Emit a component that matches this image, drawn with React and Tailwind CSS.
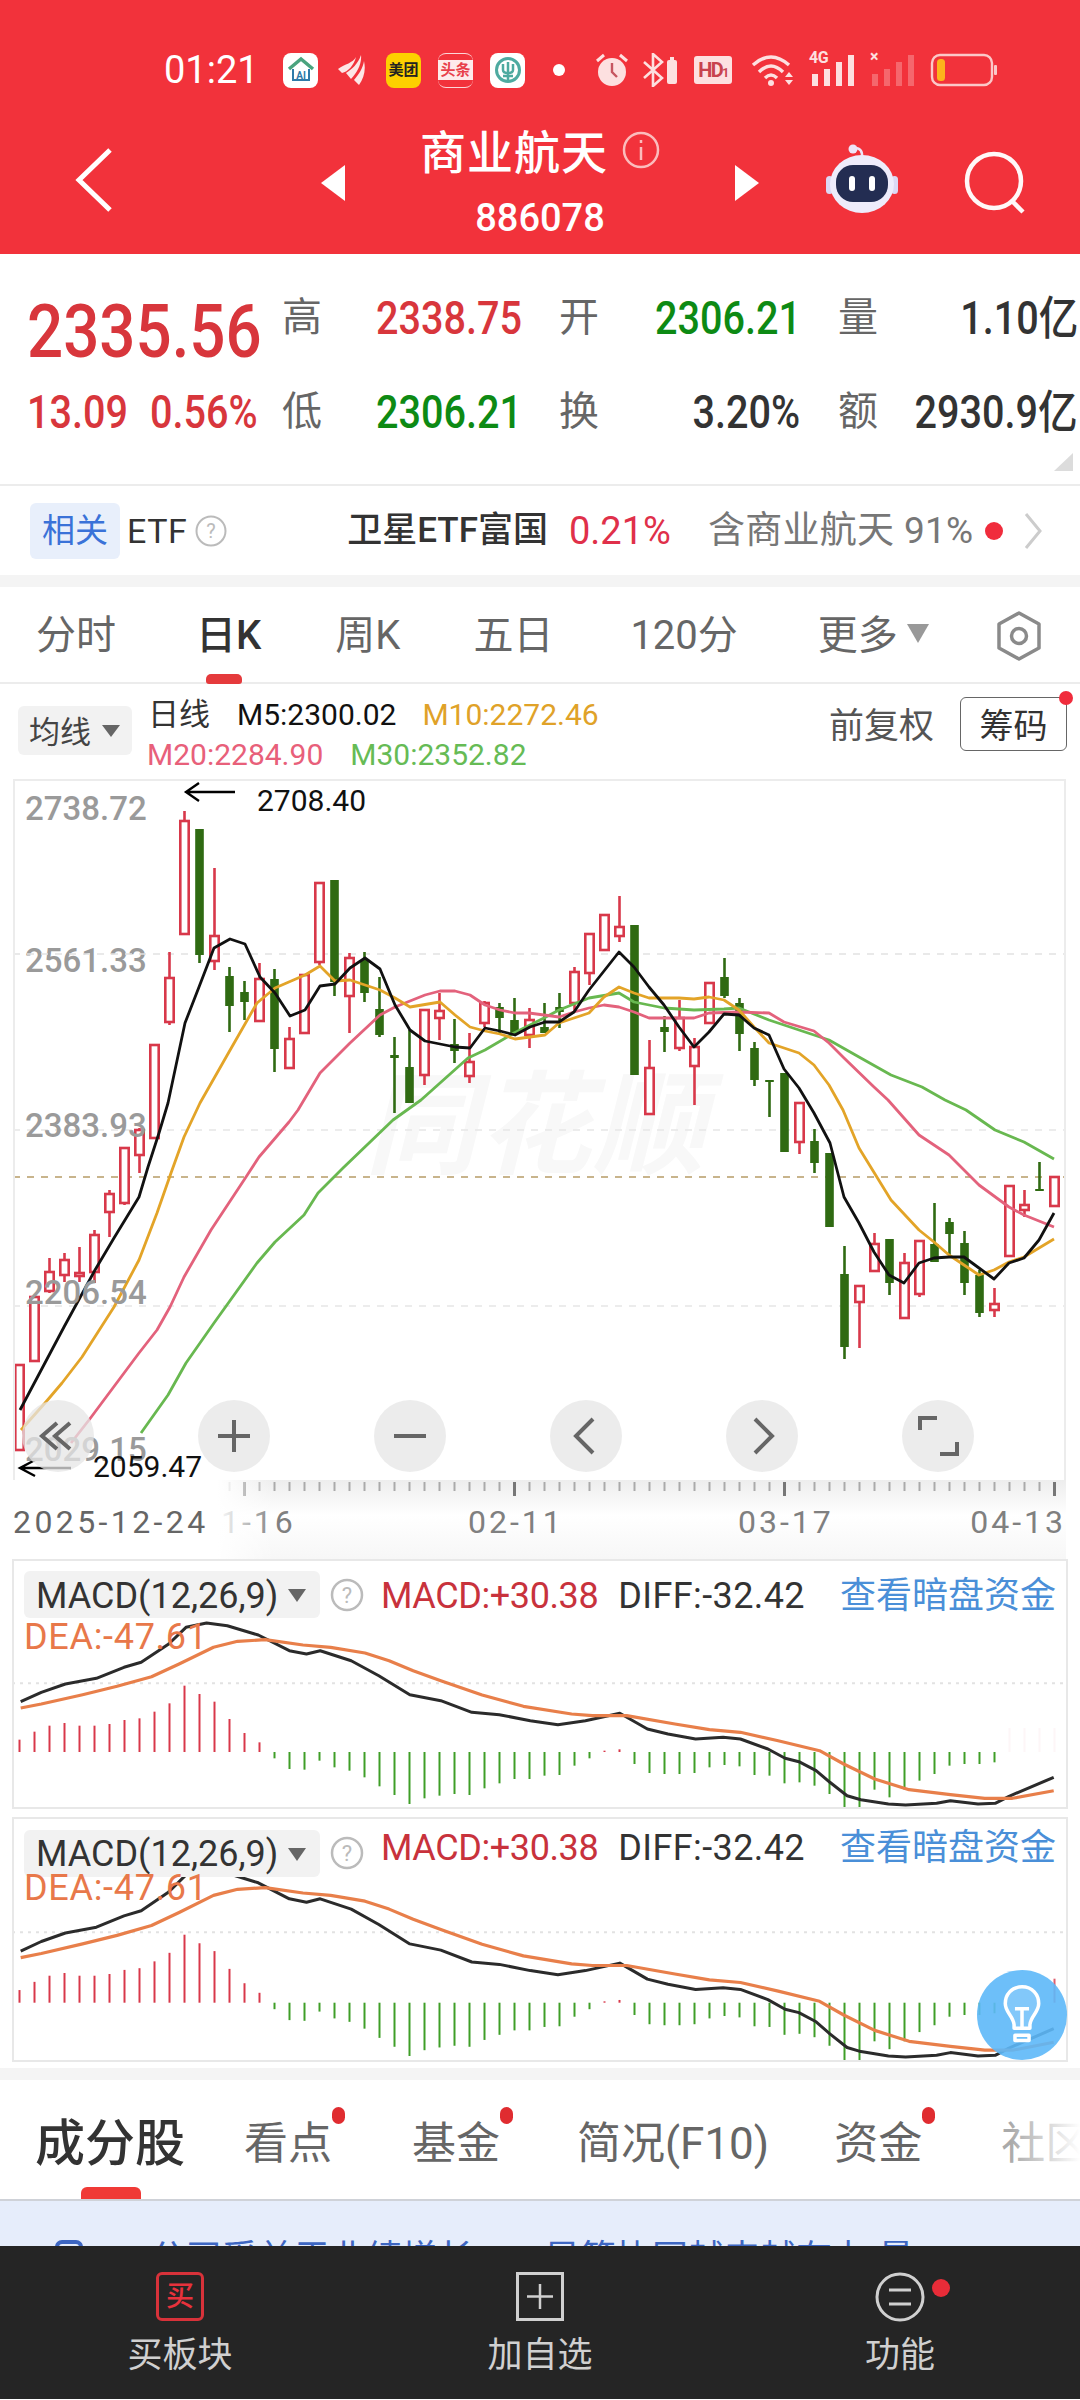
import React from "react";

const RED = "#d8384a";
const GREEN = "#2f6a12";

// [isGreen, wickTop, bodyTop, bodyBottom, wickBottom]
const C = [
  [0,1365,1365,1450,1450],[0,1297,1297,1361,1361],[0,1258,1272,1291,1293],[0,1253,1260,1275,1282],[0,1247,1273,1276,1282],
  [0,1230,1235,1272,1283],[0,1190,1194,1212,1237],[0,1148,1148,1203,1205],[0,1128,1130,1155,1173],[0,1045,1045,1138,1138],
  [0,952,978,1022,1025],[0,811,821,934,934],[1,829,829,955,963],[0,868,936,961,970],[1,967,976,1006,1032],
  [1,981,992,1002,1020],[0,963,979,1021,1021],[1,969,979,1049,1072],[0,1027,1039,1068,1068],[0,975,975,1033,1033],
  [0,883,883,962,965],[1,880,880,982,996],[0,953,958,996,1033],[1,952,960,993,1002],[1,977,1009,1035,1037],
  [1,1037,1055,1058,1113],[1,1030,1067,1103,1103],[0,1010,1010,1075,1085],[0,993,1011,1018,1040],[1,1019,1044,1051,1063],
  [0,1033,1062,1076,1083],[0,1001,1003,1023,1027],[1,1003,1007,1018,1033],[1,998,1020,1033,1035],[0,1008,1020,1035,1048],
  [1,1003,1027,1033,1033],[1,993,1007,1012,1028],[0,967,972,1003,1012],[0,934,934,973,985],[0,915,915,950,950],
  [0,896,927,936,942],[1,925,925,1075,1075],[0,1040,1068,1114,1114],[1,1016,1027,1032,1052],[0,1000,1018,1048,1051],
  [0,1038,1047,1066,1105],[0,983,983,1023,1023],[1,958,977,996,998],[1,998,1003,1034,1051],[1,1042,1048,1080,1086],
  [1,1080,1080,1082,1117],[1,1073,1073,1152,1152],[0,1103,1103,1142,1154],[1,1129,1141,1163,1173],[1,1153,1153,1227,1227],
  [1,1246,1274,1347,1359],[0,1286,1286,1302,1348],[0,1233,1244,1271,1271],[1,1239,1239,1283,1295],[0,1253,1263,1318,1318],
  [0,1241,1241,1294,1297],[1,1203,1244,1262,1262],[1,1218,1222,1234,1257],[1,1231,1243,1283,1295],[1,1270,1275,1313,1317],
  [0,1288,1304,1310,1317],[0,1186,1186,1256,1256],[0,1190,1205,1210,1217],[1,1162,1189,1191,1191],[0,1177,1177,1206,1206],
];

const MA5 = "20,1410 64,1327 95,1270 114,1238 139,1197 148,1167 159,1133 168,1103 185,1023 199,987 214,948 230,939 245,944 260,977 275,993 290,1016 305,1010 320,986 335,984 350,968 365,958 380,969 395,1005 410,1030 425,1041 440,1044 455,1047 470,1048 485,1028 500,1031 515,1035 530,1027 545,1022 559,1022 574,1012 589,990 604,971 619,952 634,967 649,987 664,1005 679,1027 694,1047 709,1032 724,1014 739,1015 754,1028 769,1035 784,1069 799,1088 814,1113 830,1143 844,1197 859,1223 874,1252 889,1275 904,1283 919,1263 934,1258 949,1257 964,1257 979,1268 994,1279 1009,1263 1024,1258 1039,1240 1054,1213";
const MA10 = "21,1430 45,1403 62,1383 82,1357 114,1307 139,1260 157,1213 171,1173 184,1137 200,1103 229,1052 257,1003 275,988 305,975 320,966 335,981 350,980 365,985 380,990 395,998 410,1007 440,1002 455,1015 470,1027 485,1031 500,1034 515,1039 530,1037 545,1035 559,1023 574,1018 589,1013 604,997 619,987 634,993 649,998 679,998 694,999 709,997 724,1000 739,1010 754,1027 769,1043 784,1048 799,1053 814,1065 829,1085 843,1110 859,1148 891,1200 919,1230 934,1242 949,1255 964,1265 979,1275 994,1270 1009,1262 1024,1257 1039,1248 1054,1239";
const MA20 = "71,1443 89,1420 139,1353 157,1330 170,1307 184,1277 211,1230 246,1177 259,1157 289,1122 298,1110 320,1073 350,1043 380,1015 395,1007 425,995 440,991 455,991 470,995 485,1005 500,1010 515,1013 529,1013 544,1015 559,1017 574,1012 589,1008 604,1005 619,1007 634,1012 649,1018 679,1018 694,1018 709,1013 739,1012 769,1013 784,1022 814,1031 829,1043 844,1058 874,1087 888,1100 919,1135 949,1155 979,1185 1009,1207 1024,1215 1054,1227";
const MA30 = "141,1433 168,1395 186,1363 214,1323 257,1263 275,1242 304,1215 318,1193 343,1168 393,1120 421,1100 468,1058 485,1050 514,1033 544,1018 559,1010 589,998 619,993 634,1002 664,1008 694,1010 724,1009 739,1008 769,1020 799,1030 829,1040 859,1057 891,1075 922,1087 945,1100 966,1110 995,1130 1024,1142 1054,1159";

const BARS = [572,548,530,522,530,530,525,513,508,488,463,410,435,458,510,552,580,628,660,662,635,655,665,685,712,738,765,748,740,735,738,718,703,690,690,680,678,650,628,605,601,645,672,675,675,672,655,648,652,678,680,703,700,710,735,778,778,722,745,722,695,675,650,645,645,640];
const DIF = [[30,458],[60,430],[95,405],[140,388],[180,355],[205,340],[245,285],[270,235],[300,222],[330,230],[375,258],[420,305],[445,315],[465,305],[510,335],[550,380],[595,437],[640,455],[685,490],[725,497],[770,515],[810,527],[850,515],[900,493],[940,540],[970,555],[1010,570],[1050,565],[1075,570],[1115,600],[1140,628],[1160,638],[1185,665],[1205,700],[1230,740],[1250,752],[1290,765],[1315,768],[1360,763],[1380,755],[1420,765],[1445,763],[1465,742],[1530,685]];
const DEA = [[30,477],[60,465],[120,437],[170,412],[220,383],[260,345],[310,295],[345,277],[385,272],[440,288],[480,295],[530,312],[565,335],[600,365],[640,395],[700,438],[760,472],[830,495],[860,500],[910,500],[980,525],[1030,542],[1075,550],[1130,575],[1190,605],[1225,645],[1270,690],[1320,722],[1380,737],[1430,748],[1470,748],[1530,725]];

function Candles() {
  return (
    <g>
      {C.map(([g, wt, bt, bb, wb], i) => {
        const x = 19.5 + 15 * i;
        const col = g ? GREEN : RED;
        return (
          <g key={i}>
            <line x1={x} x2={x} y1={wt} y2={wb} stroke={col} strokeWidth="2.6" />
            {g ? (
              <rect x={x - 4.3} y={bt} width="8.6" height={Math.max(bb - bt, 2)} fill={col} />
            ) : (
              <rect x={x - 4.2} y={bt} width="8.4" height={Math.max(bb - bt, 2)} fill="#fff" stroke={col} strokeWidth="2.6" />
            )}
          </g>
        );
      })}
    </g>
  );
}

function KChart() {
  const dash = (y, c, w) => <line x1="13" x2="1066" y1={y} y2={y} stroke={c} strokeWidth={w} strokeDasharray="7 7" />;
  return (
    <div className="relative h-[701px] mx-[13px] w-[1053px] border-t-2 border-x-2 border-[#ececec] overflow-hidden">
      <div className="absolute left-[350px] top-[290px] text-[112px] leading-none font-bold italic text-[#f8f8f8] tracking-[2px] whitespace-nowrap">同花顺</div>
      <span className="absolute left-[10px] top-[10px] text-[33px] leading-[36px] font-medium text-[#9a9a9a]">2738.72</span>
      <span className="absolute left-[10px] top-[162px] text-[33px] leading-[36px] font-medium text-[#9a9a9a]">2561.33</span>
      <svg className="absolute -left-[2px] -top-[2px]" width="1053" height="701" viewBox="13 779 1053 701">
        {dash(954, "#e2e2e2", 1.5)}
        {dash(1130, "#e6e6e6", 1.5)}
        {dash(1306, "#e6e6e6", 1.5)}
        {dash(1177, "#c8b48c", 2)}
        <Candles />
        <polyline points={MA30} fill="none" stroke="#68b850" strokeWidth="2.8" strokeLinejoin="round" />
        <polyline points={MA20} fill="none" stroke="#e3627c" strokeWidth="2.8" strokeLinejoin="round" />
        <polyline points={MA10} fill="none" stroke="#e3a428" strokeWidth="2.8" strokeLinejoin="round" />
        <polyline points={MA5} fill="none" stroke="#111" strokeWidth="2.8" strokeLinejoin="round" />
        <path d="M235 792H186M199 783L186 792L199 801" fill="none" stroke="#000" strokeWidth="2.4" />
        <path d="M71 1468H20M35 1460L20 1468L35 1476" fill="none" stroke="#000" strokeWidth="2.4" />
      </svg>
      <span className="absolute left-[10px] top-[327px] text-[33px] leading-[36px] font-medium text-[#9a9a9a]">2383.93</span>
      <span className="absolute left-[10px] top-[494px] text-[33px] leading-[36px] font-medium text-[#9a9a9a]">2206.54</span>
      <span className="absolute left-[10px] top-[651px] text-[33px] leading-[36px] font-medium text-[#9a9a9a]">2029.15</span>
      <span className="absolute left-[242px] top-[3px] text-[30px] leading-[34px] text-[#111]">2708.40</span>
      <span className="absolute left-[78px] top-[669px] text-[30px] leading-[34px] text-[#111]">2059.47</span>
      <div className="absolute left-[7px] top-[619px] flex gap-[104px]">
        {[
          <path key="a" d="M24 12L9 25L24 38M37 12L22 25L37 38" />,
          <path key="b" d="M25 9V41M9 25H41" />,
          <path key="c" d="M9 25H41" />,
          <path key="d" d="M32 8L15 25L32 42" />,
          <path key="e" d="M18 8L35 25L18 42" />,
          <path key="f" d="M7 19V7H24M44 31V43H27" />,
        ].map((p, i) => (
          <div key={i} className="w-[72px] h-[72px] rounded-full bg-[#e6e6e6]/75 flex items-center justify-center">
            <svg width="50" height="50" viewBox="0 0 50 50" fill="none" stroke="#666" strokeWidth="4">{p}</svg>
          </div>
        ))}
      </div>
    </div>
  );
}

function Axis() {
  const ticks = [];
  for (let i = 13; i < 70; i++) {
    const x = 19.5 + 15 * i;
    const long = i === 15 || i === 33 || i === 51 || i === 69;
    ticks.push(
      <line key={i} x1={x} x2={x} y1="2" y2={long ? 16 : 11} stroke={long ? "#777" : "#aaa"} strokeWidth={long ? 3 : 2} />
    );
  }
  return (
    <div className="relative h-[79px] mx-[13px] w-[1053px] bg-gradient-to-b from-[#ededed] via-[#ffffff] via-[45%] to-[#f7f7f7] overflow-hidden">
      <svg className="absolute left-0 top-0" width="1053" height="20" viewBox="13 0 1053 20">{ticks}</svg>
      <span className="absolute left-[187px] top-[23px] text-[32px] leading-[38px] tracking-[3px] text-[#808080]">01-16</span>
      <div className="absolute left-0 top-0 w-[262px] h-full bg-gradient-to-r from-white from-[78%] to-transparent" />
      <span className="absolute left-0 top-[23px] text-[32px] leading-[38px] tracking-[3.4px] text-[#666]">2025-12-24</span>
      <span className="absolute left-[455px] top-[23px] text-[32px] leading-[38px] tracking-[3px] text-[#808080]">02-11</span>
      <span className="absolute left-[725px] top-[23px] text-[32px] leading-[38px] tracking-[3px] text-[#808080]">03-17</span>
      <span className="absolute right-0 top-[23px] text-[32px] leading-[38px] tracking-[3px] text-[#808080]">04-13</span>
    </div>
  );
}

function MacdPanel({ top, height, zero, scale, faint, labelRow, deaTop, lastRed, lift }) {
  const my = (zy) => {
    const y = 1550 + zy / 3;
    return zero + (y - 1753) * scale;
  };
  const pts = (a) => a.map(([x, y]) => `${(x / 1.452).toFixed(1)},${my(y).toFixed(1)}`).join(" ");
  const gy = my(403);
  return (
    <div className="relative mx-[12px] w-[1056px] border-2 border-[#e8e8e8] overflow-hidden" style={{ height }}>
      <svg className="absolute -left-[2px] -top-[2px]" width="1056" height={height} viewBox={`12 ${top} 1056 ${height}`}>
        <line x1="12" x2="1068" y1={gy} y2={gy} stroke="#e2e2e2" strokeWidth="2" strokeDasharray="3 5" />
        {BARS.map((b, i) => {
          const x = 19.5 + 15 * i;
          const isRed = i <= 16 || i === 39 || i === 40;
          return <line key={i} x1={x} x2={x} y1={zero} y2={my(b)} stroke={isRed ? "#d8384a" : "#3f9e28"} strokeWidth="2" />;
        })}
        {[66, 67, 68, 69].map((i) => (
          <line key={i} x1={19.5 + 15 * i} x2={19.5 + 15 * i} y1={zero} y2={zero - 24} stroke="#d8384a" strokeWidth="2" opacity={i === 69 && lastRed ? 0.8 : faint} />
        ))}
        <polyline points={pts(DIF)} fill="none" stroke="#2b2b2b" strokeWidth="3" strokeLinejoin="round" />
        <polyline points={pts(DEA)} fill="none" stroke="#e87f4a" strokeWidth="3.2" strokeLinejoin="round" />
      </svg>
      <div className="absolute left-[10px] flex items-center" style={{ top: labelRow }}>
        <div className="w-[296px] h-[47px] rounded-[6px] bg-[#f2f2f2] flex items-center pl-[12px] pt-[2px]">
          <span className="text-[36px] leading-none text-[#333] whitespace-nowrap">MACD(12,26,9)</span>
          <span className="ml-[10px] w-0 h-0 border-x-[9px] border-x-transparent border-t-[13px] border-t-[#666]" />
        </div>
        <svg className="ml-[10px]" width="34" height="36" viewBox="0 0 34 36">
          <circle cx="17" cy="18" r="15" fill="#fff" stroke="#bbb" strokeWidth="2.5" />
          <text x="17" y="26" textAnchor="middle" fontSize="22" fill="#bbb">?</text>
        </svg>
        <div className="flex items-center pt-[2px]" style={{ marginBottom: lift }}>
          <span className="ml-[17px] text-[36px] leading-none text-[#c8323c] tracking-[-0.4px] whitespace-nowrap">MACD:+30.38</span>
          <span className="ml-[20px] text-[36px] leading-none text-[#333] tracking-[0.4px] whitespace-nowrap">DIFF:-32.42</span>
          <span className="ml-[35px] text-[36px] leading-none text-[#4a8fd8] whitespace-nowrap">查看暗盘资金</span>
        </div>
      </div>
      <span className="absolute left-[10px] text-[36px] leading-none text-[#e8784a] tracking-[0.7px]" style={{ top: deaTop }}>DEA:-47.61</span>
    </div>
  );
}

function StatusIcons() {
  const pale = "#fde0e0";
  return (
    <div className="flex items-center h-[40px]">
      <div className="ml-[283px] w-[35px] h-[35px] rounded-[8px] bg-white flex items-center justify-center">
        <svg width="30" height="30" viewBox="0 0 30 30" fill="none">
          <path d="M3 14L15 4L27 14" stroke="#4aa37e" strokeWidth="3.5" />
          <path d="M7 14V25H23V14" stroke="#2f7aa8" strokeWidth="2" />
          <text x="15" y="24" textAnchor="middle" fontSize="10" fontWeight="700" fill="#2f7aa8">AI</text>
        </svg>
      </div>
      <svg className="ml-[19px]" width="28" height="32" viewBox="0 0 28 32">
        <path d="M1 15C8 10 16 9 19 3C17 11 11 18 5 19Z M9 19C15 15 21 10 24 1C25 10 20 19 14 25Z M17 26C22 20 26 14 27 7C29 16 27 24 22 31Z" fill="#fde6e6" />
      </svg>
      <div className="ml-[21px] w-[35px] h-[35px] rounded-[8px] bg-[#fdd000] flex items-center justify-center text-[15px] font-bold leading-none text-[#222] whitespace-nowrap">美团</div>
      <div className="ml-[17px] w-[35px] h-[35px] rounded-[8px] border-y border-white/80 flex items-center justify-center">
        <div className="w-[35px] h-[20px] bg-white/90 text-[15px] font-bold leading-[20px] text-center text-[#e8404a] whitespace-nowrap">头条</div>
      </div>
      <div className="ml-[17px] w-[35px] h-[35px] rounded-[8px] bg-white flex items-center justify-center">
        <svg width="28" height="28" viewBox="0 0 28 28" fill="none" stroke="#4eaaa0">
          <circle cx="14" cy="14" r="11.5" strokeWidth="3" />
          <path d="M9 8V14Q9 17 14 17Q19 17 19 14V8M14 6V24M9 20H19" strokeWidth="2.5" />
        </svg>
      </div>
      <div className="ml-[28px] w-[12px] h-[12px] rounded-full bg-white" />
      <svg className="ml-[29px]" width="36" height="36" viewBox="0 0 36 36">
        <circle cx="18" cy="20" r="14" fill={pale} />
        <path d="M18 11V20L23 25" fill="none" stroke="#c65560" strokeWidth="2.4" />
        <path d="M3 9L10 3M33 9L26 3" stroke={pale} strokeWidth="3" />
      </svg>
      <svg className="ml-[12px]" width="36" height="34" viewBox="0 0 36 34">
        <path d="M2 9L20 25L11 33V1L20 9L2 25" fill="none" stroke={pale} strokeWidth="2.6" />
        <rect x="25" y="7" width="10" height="24" rx="2" fill={pale} />
        <rect x="28" y="4" width="4" height="3" fill={pale} />
      </svg>
      <div className="ml-[16px] w-[38px] h-[28px] rounded-[3px] bg-[#fde0e0] text-[20px] font-bold leading-[28px] text-center text-[#c8434d] tracking-[-1.5px]">HD<span className="text-[12px]">1</span></div>
      <svg className="ml-[19px]" width="44" height="34" viewBox="0 0 44 34" fill="none" stroke={pale}>
        <path d="M2 12Q20 -4 38 12" strokeWidth="3.4" />
        <path d="M8 19Q20 7 32 19" strokeWidth="3.4" />
        <path d="M14 25Q20 19 26 25" strokeWidth="3.4" />
        <circle cx="20" cy="30" r="3" fill={pale} stroke="none" />
        <path d="M34 24L38 19L42 24ZM34 27L38 32L42 27Z" fill={pale} stroke="none" />
      </svg>
      <div className="ml-[14px] relative w-[46px] h-[34px]">
        <span className="absolute left-0 -top-[4px] text-[16px] font-bold leading-[18px] text-[#fde0e0] tracking-[-0.5px]">4G</span>
        <svg className="absolute left-0 top-0" width="46" height="34" viewBox="0 0 46 34" fill={pale}>
          <rect x="3" y="21" width="6" height="12" /><rect x="15" y="16" width="6" height="17" /><rect x="27" y="9" width="6" height="24" /><rect x="39" y="2" width="6" height="31" />
        </svg>
      </div>
      <div className="ml-[15px] relative w-[44px] h-[34px]">
        <span className="absolute left-0 -top-[5px] text-[16px] font-bold leading-[18px] text-[#fde0e0]">×</span>
        <svg className="absolute left-0 top-0" width="44" height="34" viewBox="0 0 44 34" fill="#fde0e0" opacity="0.3">
          <rect x="2" y="21" width="6" height="12" /><rect x="14" y="16" width="6" height="17" /><rect x="26" y="9" width="6" height="24" /><rect x="38" y="2" width="6" height="31" />
        </svg>
      </div>
      <svg className="ml-[16px]" width="68" height="34" viewBox="0 0 68 34">
        <rect x="2" y="2" width="60" height="30" rx="8" fill="none" stroke="#fbc8c8" strokeWidth="2.4" />
        <rect x="7" y="6" width="8" height="22" rx="3.5" fill="#fdb41c" />
        <rect x="64" y="12" width="3" height="10" rx="1" fill="#fbc8c8" />
      </svg>
    </div>
  );
}

function Header() {
  return (
    <div className="h-[254px] bg-[#f2323b] text-white">
      <div className="relative pt-[50px] h-[128px]">
        <span className="absolute left-[164px] top-[50px] text-[38px] leading-[40px]">01:21</span>
        <StatusIcons />
      </div>
      <div className="flex items-start">
        <svg className="ml-[74px] mt-[20px]" width="40" height="64" viewBox="0 0 40 64" fill="none" stroke="#fff" strokeWidth="5">
          <path d="M36 2L5 32L36 62" />
        </svg>
        <svg className="ml-[207px] mt-[37px]" width="24" height="36" viewBox="0 0 24 36" fill="#fff"><path d="M24 0V36L0 18Z" /></svg>
        <div className="w-[390px] flex flex-col items-center">
          <div className="h-[50px] flex items-center">
            <span className="text-[46px] leading-none font-medium tracking-[1px]">商业航天</span>
            <svg className="ml-[14px] mb-[6px]" width="38" height="38" viewBox="0 0 38 38" fill="none" stroke="#fbbcbc" strokeWidth="2.5">
              <circle cx="19" cy="19" r="17" />
              <path d="M19 16V29M19 9V12" />
            </svg>
          </div>
          <span className="mt-[18px] h-[44px] text-[38px] leading-[44px] font-medium">886078</span>
        </div>
        <svg className="mt-[37px]" width="24" height="36" viewBox="0 0 24 36" fill="#fff"><path d="M0 0V36L24 18Z" /></svg>
        <svg className="ml-[66px] mt-[16px]" width="74" height="70" viewBox="0 0 74 70">
          <path d="M37 14Q38 4 30 4" fill="none" stroke="#eee4f8" strokeWidth="2.5" />
          <circle cx="28" cy="5" r="4.5" fill="#eee4f8" />
          <rect x="1" y="32" width="7" height="18" rx="3.5" fill="#dcd8f4" />
          <rect x="66" y="32" width="7" height="18" rx="3.5" fill="#dcd8f4" />
          <ellipse cx="37" cy="40" rx="32" ry="29" fill="#eeecfb" />
          <rect x="11" y="21" width="52" height="37" rx="17" fill="#232d52" />
          <rect x="24" y="32" width="6" height="15" rx="3" fill="#fff" />
          <rect x="44" y="32" width="6" height="15" rx="3" fill="#fff" />
        </svg>
        <svg className="ml-[62px] mt-[22px]" width="72" height="68" viewBox="0 0 72 68" fill="none" stroke="#fff8f8" strokeWidth="4.5">
          <circle cx="33" cy="31" r="27" />
          <path d="M52 52L62 62" />
        </svg>
      </div>
    </div>
  );
}

const Cond = ({ className = "", children }) => (
  <span className={`inline-block origin-left scale-x-[0.86] whitespace-nowrap ${className}`}>{children}</span>
);
const CondR = ({ className = "", children }) => (
  <span className={`inline-block origin-right scale-x-[0.86] whitespace-nowrap ${className}`}>{children}</span>
);

function Quote() {
  const label = "text-[40px] leading-none text-[#666]";
  const val = "text-[46px] leading-none font-medium";
  const cols = "grid grid-cols-[255px_94px_183px_96px_183px_40px_200px] grid-rows-[60px] h-[60px] items-center pl-[27px]";
  return (
    <div className="relative h-[232px] bg-white border-b-2 border-[#ececec] pt-[34px]">
      <div className={cols}>
        <Cond className="text-[74px] leading-none font-medium text-[#d8363c] mt-[28px]">2335.56</Cond>
        <span className={label}>高</span>
        <Cond className={`${val} text-[#d8363c]`}>2338.75</Cond>
        <span className={label}>开</span>
        <Cond className={`${val} text-[#0d8a14]`}>2306.21</Cond>
        <span className={label}>量</span>
        <div className="text-right"><CondR className={`${val} text-[#333]`}>1.10亿</CondR></div>
      </div>
      <div className={`${cols} mt-[34px]`}>
        <div className="flex text-[#d8363c]">
          <Cond className={`${val} w-[123px]`}>13.09</Cond>
          <Cond className={val}>0.56%</Cond>
        </div>
        <span className={label}>低</span>
        <Cond className={`${val} text-[#0d8a14]`}>2306.21</Cond>
        <span className={label}>换</span>
        <div className="text-right pr-[38px]"><CondR className={`${val} text-[#333]`}>3.20%</CondR></div>
        <span className={label}>额</span>
        <div className="text-right"><CondR className={`${val} text-[#333]`}>2930.9亿</CondR></div>
      </div>
      <svg className="absolute right-[7px] bottom-[13px]" width="19" height="18" viewBox="0 0 19 18"><path d="M19 0V18H0Z" fill="#dcdcdc" /></svg>
    </div>
  );
}

function EtfRow() {
  return (
    <div className="h-[89px] bg-white flex items-center">
      <div className="ml-[30px] w-[90px] h-[56px] rounded-[6px] bg-[#e8effb] flex items-center justify-center text-[33px] leading-none text-[#3a72d8]">相关</div>
      <span className="ml-[7px] text-[34px] leading-none text-[#333] tracking-[0.5px]">ETF</span>
      <svg className="ml-[8px]" width="32" height="32" viewBox="0 0 32 32">
        <circle cx="16" cy="16" r="14.5" fill="none" stroke="#bbb" strokeWidth="2" />
        <text x="16" y="23" textAnchor="middle" fontSize="20" fill="#bbb">?</text>
      </svg>
      <span className="ml-[120px] text-[35px] leading-none font-medium text-[#333] whitespace-nowrap">卫星ETF富国</span>
      <span className="ml-[21px] text-[38px] leading-none text-[#e0304a]">0.21%</span>
      <span className="ml-[37px] text-[37px] leading-none text-[#777] whitespace-nowrap tracking-[0.3px]">含商业航天 91%</span>
      <span className="ml-[12px] w-[18px] h-[18px] rounded-full bg-[#f02c3c]" />
      <svg className="ml-[20px]" width="20" height="38" viewBox="0 0 20 38" fill="none" stroke="#ccc" strokeWidth="3">
        <path d="M3 2L17 19L3 36" />
      </svg>
    </div>
  );
}

function PeriodTabs() {
  const t = "text-[40px] leading-none text-[#666] whitespace-nowrap";
  return (
    <div className="h-[97px] bg-white border-b-2 border-[#ececec] flex items-center pt-[2px]">
      <span className={`${t} ml-[36px]`}>分时</span>
      <div className="relative ml-[80px]">
        <span className={`${t} font-medium !text-[#333]`}>日K</span>
        <span className="absolute left-[10px] -bottom-[28px] w-[36px] h-[10px] rounded-t-[5px] rounded-b-[3px] bg-[#e53a3c]" />
      </div>
      <span className={`${t} ml-[74px]`}>周K</span>
      <span className={`${t} ml-[73px]`}>五日</span>
      <span className={`${t} ml-[77px]`}>120分</span>
      <span className={`${t} ml-[80px]`}>更多</span>
      <span className="ml-[9px] mb-[4px] w-0 h-0 border-x-[11px] border-x-transparent border-t-[19px] border-t-[#999]" />
      <svg className="ml-[65px]" width="50" height="50" viewBox="0 0 50 50" fill="none" stroke="#8a8a8a" strokeWidth="3.5">
        <path d="M25 2L45 13V37L25 48L5 37V13Z" strokeLinejoin="round" />
        <circle cx="25" cy="25" r="7.5" />
      </svg>
    </div>
  );
}

function ChartHeader() {
  return (
    <div className="h-[95px] bg-white flex items-start">
      <div className="ml-[18px] mt-[22px] w-[114px] h-[49px] rounded-[6px] bg-[#f2f2f2] flex items-center pl-[11px] pt-[3px]">
        <span className="text-[31px] leading-none text-[#444]">均线</span>
        <span className="ml-[11px] mb-[3px] w-0 h-0 border-x-[9px] border-x-transparent border-t-[12px] border-t-[#666]" />
      </div>
      <div className="ml-[15px] pt-[11px] text-[30px] leading-[40px] whitespace-nowrap">
        <div className="h-[40px] flex">
          <span className="text-[31px] ml-[1px] text-[#333]">日线</span>
          <span className="ml-[27px] text-[#111]">M5:2300.02</span>
          <span className="ml-[26px] text-[#e0a228]">M10:2272.46</span>
        </div>
        <div className="h-[40px] flex">
          <span className="text-[#e8607a]">M20:2284.90</span>
          <span className="ml-[27px] text-[#66bb55]">M30:2352.82</span>
        </div>
      </div>
      <div className="ml-auto mr-[13px] mt-[13px] h-[54px] flex items-center">
        <span className="pt-[4px] text-[35px] leading-none text-[#555]">前复权</span>
        <div className="relative ml-[26px] w-[107px] h-[54px] rounded-[6px] border border-[#666] pt-[3px] flex items-center justify-center text-[34px] leading-none text-[#333]">
          筹码
          <span className="absolute -right-[7px] -top-[7px] w-[14px] h-[14px] rounded-full bg-[#f02c3c]" />
        </div>
      </div>
    </div>
  );
}

function BottomTabs() {
  const t = "text-[44px] leading-none text-[#666] whitespace-nowrap";
  const Dot = () => <span className="absolute -right-[13px] -top-[15px] w-[13px] h-[17px] rounded-full bg-[#e02c30]" />;
  return (
    <div className="relative h-[121px] bg-white border-b-2 border-[#cfd2d8] flex items-center pt-[8px] overflow-hidden">
      <div className="relative ml-[35px]">
        <span className="text-[50px] leading-none font-medium text-[#333] whitespace-nowrap">成分股</span>
      </div>
      <span className="absolute left-[81px] bottom-0 w-[60px] h-[12px] rounded-t-[6px] bg-[#f03a36]" />
      <div className={`relative ml-[59px] ${t}`}>看点<Dot /></div>
      <div className={`relative ml-[80px] ${t}`}>基金<Dot /></div>
      <div className={`ml-[77px] ${t}`}>简况(F10)</div>
      <div className={`relative ml-[65px] ${t}`}>资金<Dot /></div>
      <div className={`ml-[79px] ${t} !text-[#aaa]`}>社区</div>
      <div className="absolute right-0 top-0 w-[70px] h-full bg-gradient-to-r from-transparent to-white" />
    </div>
  );
}

function Strip() {
  return (
    <div className="h-[45px] bg-[#e6edfb] overflow-hidden flex items-start pt-[40px] text-[#3d66c2] text-[36px] leading-[36px] whitespace-nowrap">
      <span className="ml-[55px] -mt-[1px] w-[28px] h-[28px] rounded-t-[7px] border-[4px] border-[#3d66c2]" />
      <span className="ml-[67px]">公司受益于业绩增长</span>
      <span className="ml-[70px]">星箭协同越来越有力</span>
      <span className="ml-[10px]">量</span>
    </div>
  );
}

function BottomNav() {
  const label = "text-[35px] leading-none text-[#d0d0d0] whitespace-nowrap mt-[17px]";
  return (
    <div className="h-[153px] bg-[#252525] grid grid-cols-3 pt-[26px]">
      <div className="flex flex-col items-center">
        <div className="w-[48px] h-[49px] rounded-[6px] border-[3px] border-[#d8323a] flex items-center justify-center text-[28px] leading-none font-medium text-[#e8323c]">买</div>
        <span className={label}>买板块</span>
      </div>
      <div className="flex flex-col items-center">
        <svg width="48" height="49" viewBox="0 0 48 49" fill="none" stroke="#d0d0d0" strokeWidth="3">
          <rect x="1.5" y="1.5" width="45" height="46" />
          <path d="M24 12V37M11 24.5H37" strokeWidth="2.5" />
        </svg>
        <span className={label}>加自选</span>
      </div>
      <div className="relative flex flex-col items-center">
        <svg width="50" height="50" viewBox="0 0 50 50" fill="none" stroke="#d0d0d0" strokeWidth="3">
          <circle cx="25" cy="25" r="23" />
          <path d="M14 18H36M14 32H36" />
        </svg>
        <span className="text-[35px] leading-none text-[#d0d0d0] whitespace-nowrap mt-[16px]">功能</span>
        <span className="absolute left-[212px] top-[7px] w-[18px] h-[18px] rounded-full bg-[#e82c38]" />
      </div>
    </div>
  );
}

export default function App() {
  return (
    <div className="relative w-[1080px] h-[2400px] overflow-hidden bg-white font-[family-name:Roboto,'Noto_Sans_CJK_SC',sans-serif]">
      <Header />
      <Quote />
      <EtfRow />
      <div className="h-[12px] bg-[#f4f4f4]" />
      <PeriodTabs />
      <ChartHeader />
      <KChart />
      <Axis />
      <MacdPanel top={1560} height={250} zero={1753} scale={1} faint={0.04} labelRow={10} deaTop={58} lift={0} />
      <div className="h-[8px]" />
      <MacdPanel top={1818} height={245} zero={2003.7} scale={1.025} faint={0} labelRow={9} deaTop={51} lastRed lift={12} />
      <div className="h-[6px]" />
      <div className="h-[12px] bg-[#f4f4f4]" />
      <BottomTabs />
      <Strip />
      <BottomNav />
      <div className="absolute left-[977px] top-[1970px] w-[90px] h-[90px] rounded-full bg-[#5db8f8]/90 flex items-center justify-center">
        <svg width="44" height="62" viewBox="0 0 50 70" fill="none" stroke="#fff" strokeWidth="4" strokeLinejoin="round">
          <path d="M25 3C13 3 6 12 6 22C6 32 15 36 16 46V50H34V46C35 36 44 32 44 22C44 12 37 3 25 3Z" fill="#fff" fillOpacity="0.15" />
          <path d="M17 28H33M25 28V50M17 58H33V64H17Z" />
        </svg>
      </div>
    </div>
  );
}
